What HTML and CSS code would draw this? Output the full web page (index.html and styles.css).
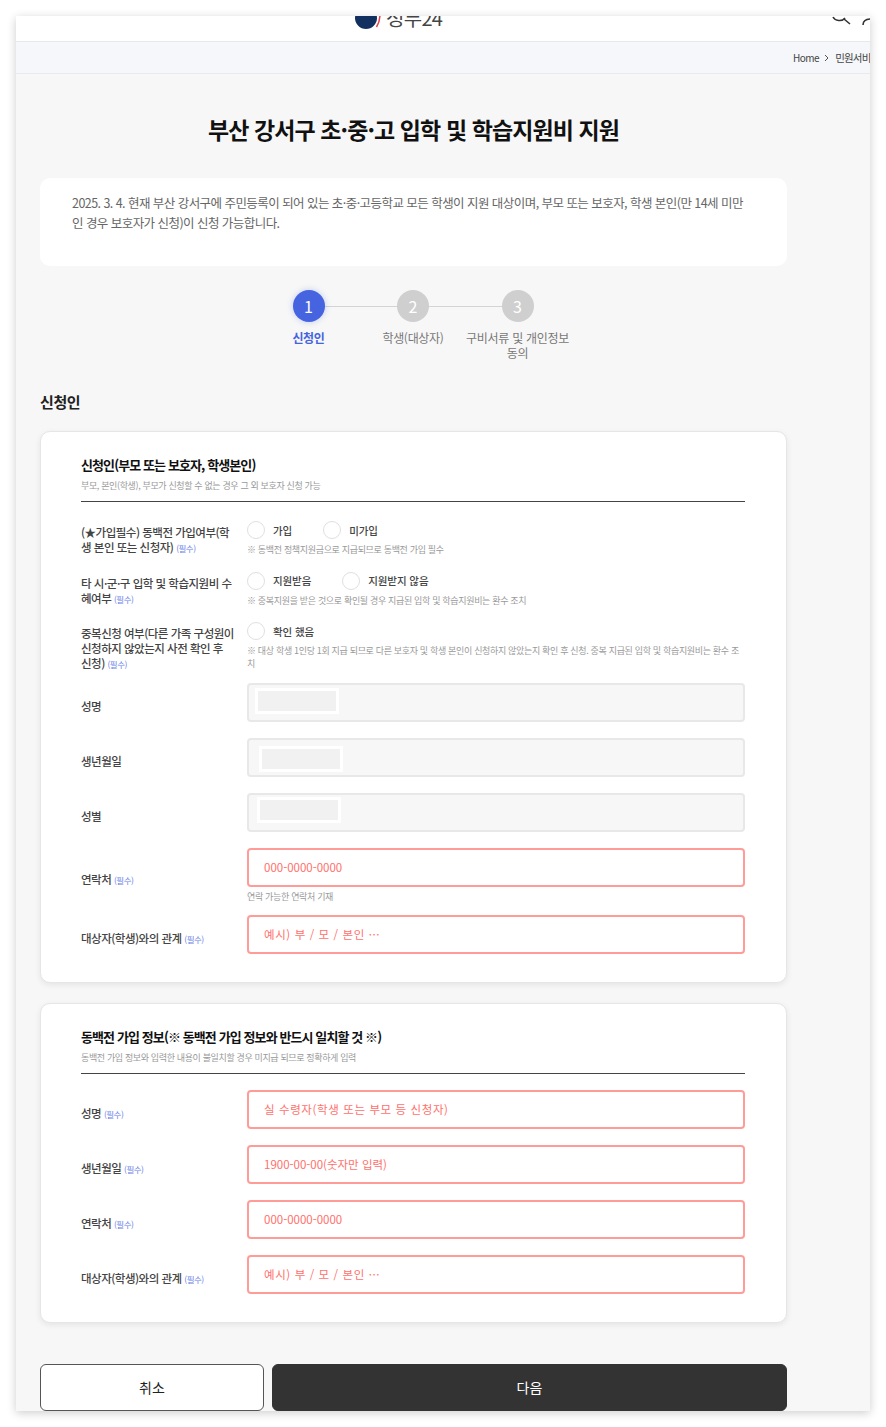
FILE: index.html
```html
<!DOCTYPE html>
<html lang="ko">
<head>
  <meta charset="UTF-8" />
  <meta name="viewport" content="width=device-width, initial-scale=1.0"/>
  <title>부산 강서구 초·중·고 입학 및 학습지원비 지원</title>
  <link rel="stylesheet" href="styles.css">
</head>
<body>
  <div class="frame">
    <header class="top">
      <div class="logo">
        <svg class="logo-mark" width="26" height="24" viewBox="0 0 26 24">
          <circle cx="11" cy="6" r="11" fill="#12305f"/>
          <path d="M25 2c0 6-1.500 10-3.500 13" fill="none" stroke="#e3404c" stroke-width="1.500"/>
        </svg>
        <span class="logo-text">정부24</span>
      </div>
      <div class="top-icons">
        <svg width="20" height="12" viewBox="0 0 20 12"><path d="M1 1c2 4 9 5 12 1M12 3l6 5" fill="none" stroke="#333" stroke-width="1.600"/></svg>
        <svg width="10" height="12" viewBox="0 0 10 12"><path d="M1 9c0-4 3-6 8-6" fill="none" stroke="#333" stroke-width="1.600"/></svg>
      </div>
    </header>

    <nav class="crumbs">
      <span>Home</span>
      <svg width="6" height="8" viewBox="0 0 6 8"><path d="M1 1l3 3-3 3" fill="none" stroke="#555" stroke-width="1"/></svg>
      <span>민원서비스</span>
    </nav>

    <main class="content">
      <h1 class="page-title">부산 강서구 초·중·고 입학 및 학습지원비 지원</h1>

      <div class="info-box">2025. 3. 4. 현재 부산 강서구에 주민등록이 되어 있는 초·중·고등학교 모든 학생이 지원 대상이며, 부모 또는 보호자, 학생 본인(만 14세 미만인 경우 보호자가 신청)이 신청 가능합니다.</div>

      <ol class="steps">
        <li class="step active"><span class="step-num">1</span><span class="step-label">신청인</span></li>
        <li class="step"><span class="step-num">2</span><span class="step-label">학생(대상자)</span></li>
        <li class="step"><span class="step-num">3</span><span class="step-label">구비서류 및 개인정보 동의</span></li>
      </ol>

      <h2 class="section-title">신청인</h2>

      <section class="card card-main">
        <h3 class="card-title">신청인(부모 또는 보호자, 학생본인)</h3>
        <p class="card-sub">부모, 본인(학생), 부모가 신청할 수 없는 경우 그 외 보호자 신청 가능</p>

        <div class="row row-radio">
          <div class="label">(★가입필수) 동백전 가입여부(학생 본인 또는 신청자) <em>(필수)</em></div>
          <div>
            <div class="radios">
              <label class="radio"><span class="dot"></span>가입</label>
              <label class="radio"><span class="dot"></span>미가입</label>
            </div>
            <p class="note">※ 동백전 정책지원금으로 지급되므로 동백전 가입 필수</p>
          </div>
        </div>

        <div class="row row-radio">
          <div class="label">타 시·군·구 입학 및 학습지원비 수혜여부 <em>(필수)</em></div>
          <div>
            <div class="radios">
              <label class="radio"><span class="dot"></span>지원받음</label>
              <label class="radio"><span class="dot"></span>지원받지 않음</label>
            </div>
            <p class="note">※ 중복지원을 받은 것으로 확인될 경우 지급된 입학 및 학습지원비는 환수 조치</p>
          </div>
        </div>

        <div class="row row-radio">
          <div class="label">중복신청 여부(다른 가족 구성원이 신청하지 않았는지 사전 확인 후 신청) <em>(필수)</em></div>
          <div>
            <div class="radios">
              <label class="radio"><span class="dot"></span>확인 했음</label>
            </div>
            <p class="note">※ 대상 학생 1인당 1회 지급 되므로 다른 보호자 및 학생 본인이 신청하지 않았는지 확인 후 신청. 중복 지급된 입학 및 학습지원비는 환수 조치</p>
          </div>
        </div>

        <div class="row">
          <div class="label">성명</div>
          <div class="field-off shift-a"><span class="redact"></span></div>
        </div>
        <div class="row">
          <div class="label">생년월일</div>
          <div class="field-off shift-b"><span class="redact"></span></div>
        </div>
        <div class="row">
          <div class="label">성별</div>
          <div class="field-off shift-c"><span class="redact"></span></div>
        </div>
        <div class="row">
          <div class="label">연락처 <em>(필수)</em></div>
          <div>
            <input class="field" type="text" placeholder="000-0000-0000" />
            <p class="hint">연락 가능한 연락처 기재</p>
          </div>
        </div>
        <div class="row row-after-hint">
          <div class="label">대상자(학생)와의 관계 <em>(필수)</em></div>
          <input class="field wide" type="text" placeholder="예시) 부 / 모 / 본인 ···" />
        </div>
      </section>

      <section class="card card-second">
        <h3 class="card-title">동백전 가입 정보(※ 동백전 가입 정보와 반드시 일치할 것 ※)</h3>
        <p class="card-sub">동백전 가입 정보와 입력한 내용이 불일치할 경우 미지급 되므로 정확하게 입력</p>

        <div class="row">
          <div class="label">성명 <em>(필수)</em></div>
          <input class="field wide" type="text" placeholder="실 수령자(학생 또는 부모 등 신청자)" />
        </div>
        <div class="row">
          <div class="label">생년월일 <em>(필수)</em></div>
          <input class="field" type="text" placeholder="1900-00-00(숫자만 입력)" />
        </div>
        <div class="row">
          <div class="label">연락처 <em>(필수)</em></div>
          <input class="field" type="text" placeholder="000-0000-0000" />
        </div>
        <div class="row">
          <div class="label">대상자(학생)와의 관계 <em>(필수)</em></div>
          <input class="field wide" type="text" placeholder="예시) 부 / 모 / 본인 ···" />
        </div>
      </section>

      <div class="actions">
        <button class="btn btn-cancel" type="button">취소</button>
        <button class="btn btn-next" type="button">다음</button>
      </div>
    </main>
  </div>
</body>
</html>
```

FILE: styles.css
```css
* {
  box-sizing: border-box;
}

html, body {
  height: 100%;
}

body {
  margin: 0;
  padding: 16px;
  overflow: hidden;
  background: #fff;
  color: #333;
  font-family: "Noto Sans CJK KR", "Noto Sans", sans-serif;
}

.frame {
  height: 1395px;
  overflow: hidden;
  background: #f7f7f7;
  box-shadow: 0 2px 9px rgba(0,0,0,0.2);
}

/* header is cut off at the top of the capture */
.top {
  height: 26px;
  background: #fff;
  border-bottom: 1px solid #e6e8ec;
  overflow: hidden;
  display: flex;
  justify-content: space-between;
  padding-left: 339px;
}

.logo {
  display: flex;
  gap: 5px;
  margin-top: -11px;
}

.logo-mark {
  margin-top: 7px;
}

.logo-text {
  font-size: 20px;
  line-height: 26px;
  color: #444;
  letter-spacing: -0.7px;
}

.top-icons {
  display: flex;
  gap: 10px;
  align-items: flex-start;
  margin-right: -2px;
}

.crumbs {
  height: 32px;
  padding-left: 777px;
  background: #f5f7fa;
  border-bottom: 1px solid #e8eaee;
  display: flex;
  align-items: center;
  gap: 3px;
  font-size: 10px;
  letter-spacing: -0.5px;
  color: #444;
  white-space: nowrap;
  overflow: hidden;
}

.crumbs svg {
  flex: none;
  margin: 1px 2px 0;
}

.crumbs svg + span {
  font-size: 10.500px;
  letter-spacing: -0.8px;
}

.content {
  padding: 0 83px 0 24px;
}

.page-title {
  margin: 38px 0 32px;
  font-size: 23px;
  line-height: 34px;
  font-weight: 700;
  color: #111;
  text-align: center;
  letter-spacing: -0.9px;
}

.info-box {
  height: 88px;
  padding: 15px 40px 15px 32px;
  background: #fff;
  border-radius: 10px;
  font-size: 12.500px;
  line-height: 19.500px;
  color: #666;
  letter-spacing: -0.55px;
}

.steps {
  list-style: none;
  margin: 24px 0 0;
  padding: 0 1px 0 0;
  display: flex;
  justify-content: center;
}

.step {
  position: relative;
  width: 104.500px;
  display: flex;
  flex-direction: column;
  align-items: center;
  gap: 8px;
  text-align: center;
}

.step:not(:last-child)::after {
  content: "";
  position: absolute;
  top: 16px;
  left: 50%;
  width: 100%;
  border-top: 1px solid #d4d4d4;
}

.step-num {
  position: relative;
  z-index: 1;
  width: 32px;
  height: 32px;
  border-radius: 50%;
  background: #cfcfcf;
  color: #fff;
  font-size: 16px;
  line-height: 32px;
}

.step-label {
  font-size: 12px;
  line-height: 15px;
  color: #777;
  letter-spacing: -0.3px;
}

.step.active .step-num {
  background: #4664e0;
  box-shadow: 0 0 6px rgba(70,100,224,0.3);
}

.step.active .step-label {
  color: #4664e0;
  font-weight: 700;
}

.section-title {
  margin: 31px 0 18px;
  font-size: 15px;
  line-height: 22px;
  font-weight: 700;
  color: #222;
  letter-spacing: -0.4px;
}

.card {
  padding: 23px 41px 0 40px;
  background: #fff;
  border: 1px solid #e6e6e6;
  border-radius: 10px;
  box-shadow: 0 2px 6px rgba(0,0,0,0.08);
}

.card-main {
  height: 552px;
}

.card-second {
  height: 320px;
  margin-top: 20px;
}

.card-title {
  margin: 0;
  font-size: 13px;
  line-height: 19px;
  font-weight: 700;
  color: #111;
  letter-spacing: -0.9px;
}

.card-sub {
  margin: 5px 0 0;
  padding-bottom: 9px;
  border-bottom: 1px solid #444;
  font-size: 9px;
  line-height: 13px;
  color: #999;
  letter-spacing: -0.36px;
}

.row {
  display: grid;
  grid-template-columns: 166px 1fr;
  align-items: center;
  margin-top: 16px;
}

.row-radio {
  align-items: start;
  margin-top: 0;
}

.card-main .card-sub + .row {
  padding-top: 18px;
}

.card-second .card-sub + .row {
  margin-top: 16px;
}

.row-radio + .row-radio {
  margin-top: 14.500px;
}

.row-radio + .row:not(.row-radio) {
  margin-top: 11px;
}

.row-after-hint {
  margin-top: 12px;
}

.label {
  padding: 8px 12.500px 0 0;
  font-size: 11.500px;
  font-weight: 500;
  line-height: 15px;
  color: #444;
  letter-spacing: -0.5px;
}

.row-radio .label {
  padding-top: 5px;
}

.label em {
  font-style: normal;
  font-size: 8.500px;
  font-weight: 400;
  color: #6b80e8;
}

.radios {
  display: flex;
  gap: 31px;
  height: 20px;
}

.radio {
  display: flex;
  align-items: center;
  gap: 8px;
  font-size: 10.500px;
  font-weight: 500;
  letter-spacing: -0.1px;
  color: #444;
}

.dot {
  width: 18px;
  height: 18px;
  border: 1px solid #e0e0e0;
  border-radius: 50%;
  background: #fff;
}

.note {
  margin: 3px 0 0;
  font-size: 9px;
  line-height: 13px;
  color: #999;
  letter-spacing: -0.33px;
}

.field-off {
  height: 39px;
  display: flex;
  background: #f7f7f7;
  border: 2px solid #e8e8e8;
  border-radius: 4px;
  align-items: center;
}

.shift-a {
  padding-left: 6px;
}

.shift-a .redact {
  margin-bottom: 3px;
}

.shift-b {
  padding-left: 10px;
}

.shift-b .redact {
  margin-top: 3px;
}

.shift-c {
  padding-left: 8px;
}

.shift-c .redact {
  margin-bottom: 5px;
}

.redact {
  width: 84px;
  height: 26px;
  background: #f1f1f1;
  border: 3px solid #fff;
}

.field {
  display: block;
  width: 100%;
  height: 39px;
  padding: 0 15px 2px;
  background: #fff;
  border: 2px solid #ff9c98;
  border-radius: 4px;
  font-family: inherit;
  font-size: 11.500px;
  color: #ff706b;
}

.field::placeholder {
  color: #ff706b;
  opacity: 1;
}

.wide {
  letter-spacing: 0.6px;
}

.hint {
  margin: 3px 0 0;
  font-size: 9px;
  line-height: 13px;
  color: #999;
  letter-spacing: -0.33px;
}

.actions {
  display: flex;
  gap: 8px;
  margin-top: 41px;
}

.btn {
  height: 47px;
  padding-bottom: 3px;
  border-radius: 6px;
  font-family: inherit;
  font-size: 14px;
}

.btn-cancel {
  width: 224px;
  background: #fff;
  border: 1px solid #555;
  color: #222;
}

.btn-next {
  flex: 1;
  background: #333;
  border: 1px solid #333;
  color: #fff;
}
```
